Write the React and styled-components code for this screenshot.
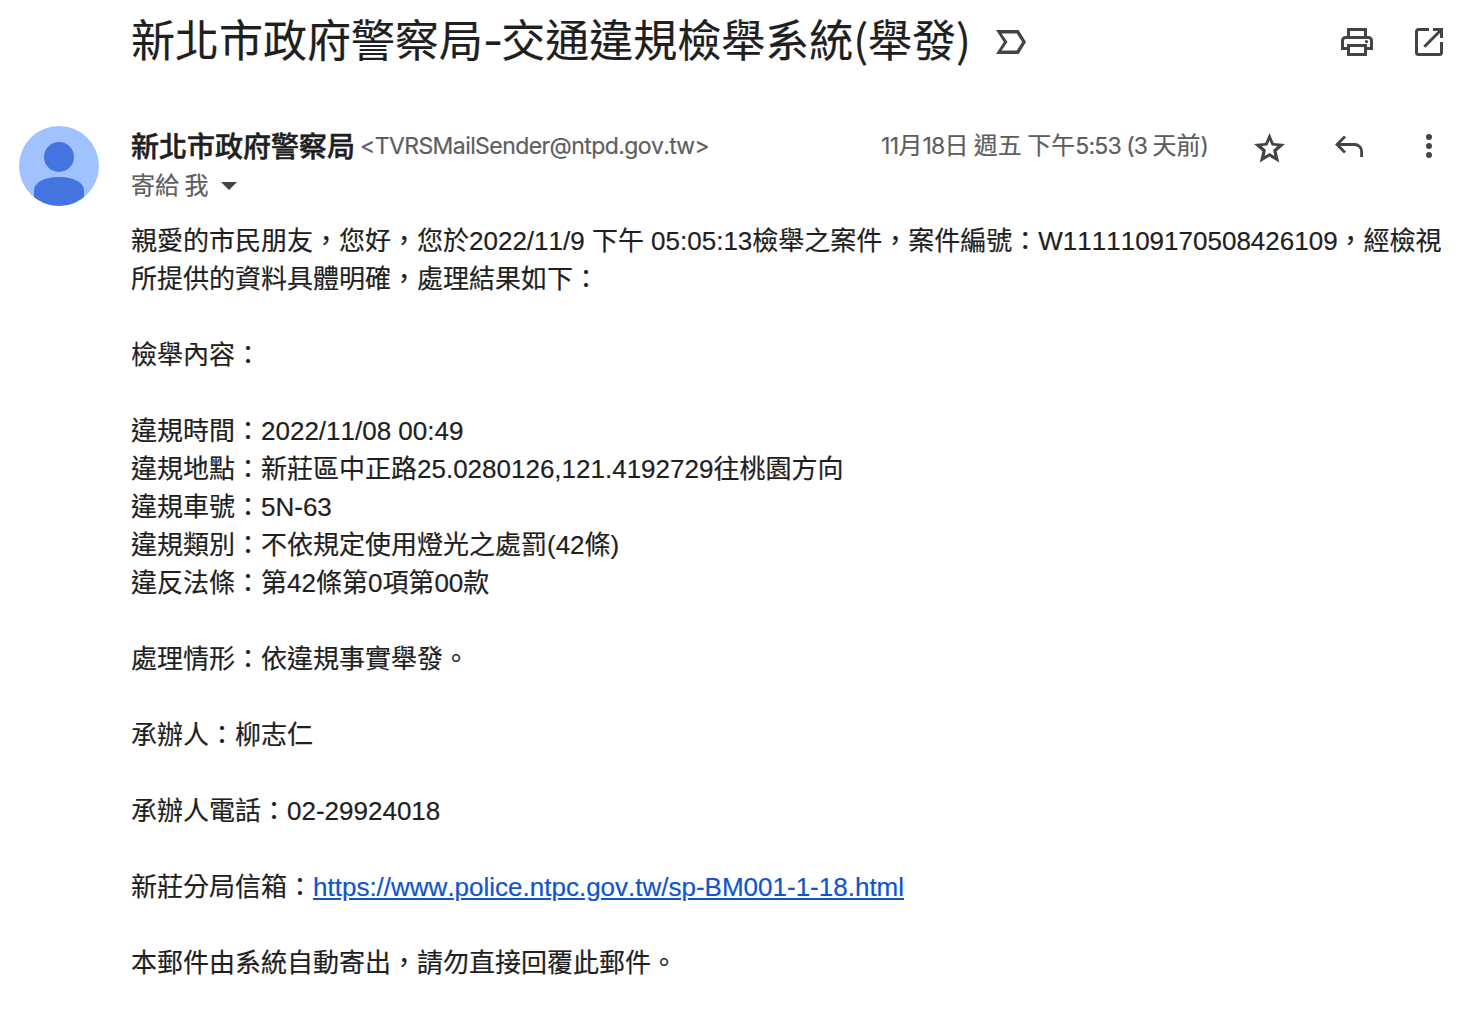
import React from 'react';
import styled, { createGlobalStyle } from 'styled-components';

const GlobalStyle = createGlobalStyle`
  * {
    box-sizing: border-box;
  }

  body {
    margin: 0;
    background: #ffffff;
    overflow: hidden;
  }
`;

// Styled Components
const Page = styled.main`
  height: 1012px;
  padding: 0 20px 0 19px;
  color: #1f1f1f;
  font-family: 'Liberation Sans', 'Noto Sans CJK TC', sans-serif;
  font-kerning: none;
  -webkit-text-stroke: 0.2px currentColor;
`;

const SubjectBar = styled.header`
  display: flex;
  align-items: center;
  height: 84px;
  padding-left: 112px;
`;

const Subject = styled.h1`
  margin: 0;
  padding-bottom: 6px;
  font-family: 'Noto Sans CJK TC', sans-serif;
  font-size: 44px;
  font-weight: 400;
  line-height: 60px;
  white-space: nowrap;
`;

const Latin = styled.span`
  font-family: Inter, sans-serif;
  font-size: 23px;
  font-weight: 400;
  letter-spacing: ${({ $spacing }) => $spacing || 0}px;
`;

const Dash = styled.span`
  font-family: Inter, sans-serif;
  letter-spacing: -2px;
`;

const IconButton = styled.button`
  display: flex;
  align-items: center;
  justify-content: center;
  flex-shrink: 0;
  width: 40px;
  height: 40px;
  margin: 0;
  padding: 0;
  border: 0;
  background: none;
  color: #444444;
`;

const LabelButton = styled(IconButton)`
  margin-left: 20px;
`;

const SubjectActions = styled.div`
  display: flex;
  gap: 32px;
  margin-left: auto;
`;

const MessageHeader = styled.section`
  display: grid;
  grid-template-columns: 112px 1fr auto;
  height: 122px;
  padding-top: 42px;
`;

const SenderBlock = styled.div`
  min-width: 0;
  white-space: nowrap;
`;

const SenderLine = styled.div`
  display: flex;
  align-items: center;
  height: 40px;
`;

const SenderName = styled.span`
  padding-bottom: 3px;
  font-family: 'Noto Sans CJK TC', sans-serif;
  font-size: 28px;
  font-weight: 500;
  -webkit-text-stroke-width: 0.5px;
`;

const SenderEmail = styled.span`
  margin-left: 5px;
  color: #5e5e5e;
  font-family: Inter, sans-serif;
  font-size: 23px;
  letter-spacing: -0.58px;
`;

const Recipient = styled.div`
  display: flex;
  align-items: center;
  height: 40px;
  gap: 13px;
  color: #5e5e5e;
  font-family: 'Noto Sans CJK TC', sans-serif;
  font-size: 24px;
  font-weight: 400;
`;

const RecipientName = styled.span`
  padding-bottom: 5px;
`;

const MessageActions = styled.div`
  display: flex;
  align-items: center;
  height: 40px;
`;

const DateText = styled.span`
  margin-right: 40px;
  padding-bottom: 5px;
  color: #5e5e5e;
  font-family: 'Noto Sans CJK TC', sans-serif;
  font-size: 24px;
  font-weight: 400;
  white-space: nowrap;
`;

const ButtonGroup = styled.div`
  display: flex;
  gap: 40px;
`;

const StarButton = styled(IconButton)`
  padding-top: 3px;
`;

const Body = styled.article`
  padding: 16px 0 0 112px;
  font-size: 26px;
  line-height: 38px;
  white-space: nowrap;
`;

const Line = styled.p`
  height: 38px;
  margin: 0;
`;

const MailLink = styled.a`
  color: #1155cc;
  text-decoration: underline;
`;

const Avatar = () => (
  <svg width="80" height="80" viewBox="0 0 80 80">
    <defs>
      <clipPath id="avatar-clip">
        <circle cx="40" cy="40" r="40" />
      </clipPath>
    </defs>
    <g clipPath="url(#avatar-clip)">
      <rect width="80" height="80" fill="#a0c2ff" />
      <circle cx="40" cy="31" r="15" fill="#4374e0" />
      <path d="M15 80V65C15 56 26 51 40 51s25 5 25 14v15z" fill="#4374e0" />
    </g>
  </svg>
);

const LabelIcon = () => (
  <svg width="30" height="24" viewBox="0 0 30 24">
    <path
      fillRule="evenodd"
      fill="currentColor"
      d="M0 0H22.6L30 12L22.6 24H0L7.8 12zM5.6 3.4L11.5 12L5.6 20.6H20.7L26.2 12L20.7 3.4z"
    />
  </svg>
);

const PrintIcon = () => (
  <svg width="32" height="28" viewBox="0 0 32 28" fill="none" stroke="currentColor" strokeWidth="3">
    <path d="M7.5 9.5v-8h17v8" />
    <path d="M7.5 20.5h-6v-8a3 3 0 0 1 3-3h23a3 3 0 0 1 3 3v8h-6" />
    <path d="M7.5 17.5h17v9h-17z" />
    <circle cx="25.5" cy="13.6" r="1.6" fill="currentColor" stroke="none" />
  </svg>
);

const OpenIcon = () => (
  <svg width="28" height="28" viewBox="0 0 28 28" fill="none" stroke="currentColor" strokeWidth="3">
    <path d="M14 1.5H3.5a2 2 0 0 0-2 2v21a2 2 0 0 0 2 2h21a2 2 0 0 0 2-2V14" />
    <path d="M18 1.5h8.5V10M26 2L9.3 18.7" />
  </svg>
);

const StarIcon = () => (
  <svg width="31" height="30" viewBox="0 0 31 30">
    <path
      fillRule="evenodd"
      fill="currentColor"
      d="M15.5 0L19.7 9.9L31 11L22.6 18.3L25.3 29.5L15.5 23.6L5.7 29.5L8.4 18.3L0 11L11.3 9.9zM15.5 7.4L13.3 12.6L7.6 13.1L11.9 16.9L10.6 22.9L15.5 19.9L20.4 22.9L19.1 16.9L23.4 13.1L17.7 12.6z"
    />
  </svg>
);

const ReplyIcon = () => (
  <svg width="28" height="22" viewBox="0 0 28 22" fill="none" stroke="currentColor" strokeWidth="2.8">
    <path d="M10 1.5L2 9.5l8 8M2 9.5h17.6a7 7 0 0 1 7 7V22" />
  </svg>
);

const MoreIcon = () => (
  <svg width="6" height="24" viewBox="0 0 6 24" fill="currentColor">
    <circle cx="3" cy="3" r="3" />
    <circle cx="3" cy="12" r="3" />
    <circle cx="3" cy="21" r="3" />
  </svg>
);

const CaretIcon = () => (
  <svg width="16" height="8" viewBox="0 0 16 8">
    <path d="M0 0h16L8 8z" fill="#444444" />
  </svg>
);

const App = () => {
  return (
    <>
      <GlobalStyle />
      <Page>
        <SubjectBar>
          <Subject>
            新北市政府警察局<Dash>-</Dash>交通違規檢舉系統(舉發)
          </Subject>
          <LabelButton aria-label="標籤">
            <LabelIcon />
          </LabelButton>
          <SubjectActions>
            <IconButton aria-label="列印">
              <PrintIcon />
            </IconButton>
            <IconButton aria-label="開新視窗">
              <OpenIcon />
            </IconButton>
          </SubjectActions>
        </SubjectBar>

        <MessageHeader>
          <Avatar />
          <SenderBlock>
            <SenderLine>
              <SenderName>新北市政府警察局</SenderName>
              <SenderEmail>&lt;TVRSMailSender@ntpd.gov.tw&gt;</SenderEmail>
            </SenderLine>
            <Recipient>
              <RecipientName>寄給 我</RecipientName>
              <CaretIcon />
            </Recipient>
          </SenderBlock>
          <MessageActions>
            <DateText>
              <Latin $spacing={-0.6}>11</Latin>月<Latin $spacing={-0.8}>18</Latin>日 週五 下午
              <Latin $spacing={-0.8}>5:53</Latin> <Latin $spacing={-0.8}>(3</Latin> 天前
              <Latin>)</Latin>
            </DateText>
            <ButtonGroup>
              <StarButton aria-label="加星號">
                <StarIcon />
              </StarButton>
              <IconButton aria-label="回覆">
                <ReplyIcon />
              </IconButton>
              <IconButton aria-label="更多">
                <MoreIcon />
              </IconButton>
            </ButtonGroup>
          </MessageActions>
        </MessageHeader>

        <Body>
          <Line>
            親愛的市民朋友，您好，您於2022/11/9 下午 05:05:13檢舉之案件，案件編號：W1111109170508426109，經檢視
          </Line>
          <Line>所提供的資料具體明確，處理結果如下：</Line>
          <Line />
          <Line>檢舉內容：</Line>
          <Line />
          <Line>違規時間：2022/11/08 00:49</Line>
          <Line>違規地點：新莊區中正路25.0280126,121.4192729往桃園方向</Line>
          <Line>違規車號：5N-63</Line>
          <Line>違規類別：不依規定使用燈光之處罰(42條)</Line>
          <Line>違反法條：第42條第0項第00款</Line>
          <Line />
          <Line>處理情形：依違規事實舉發。</Line>
          <Line />
          <Line>承辦人：柳志仁</Line>
          <Line />
          <Line>承辦人電話：02-29924018</Line>
          <Line />
          <Line>
            新莊分局信箱：
            <MailLink href="https://www.police.ntpc.gov.tw/sp-BM001-1-18.html">
              https://www.police.ntpc.gov.tw/sp-BM001-1-18.html
            </MailLink>
          </Line>
          <Line />
          <Line>本郵件由系統自動寄出，請勿直接回覆此郵件。</Line>
        </Body>
      </Page>
    </>
  );
};

export default App;
